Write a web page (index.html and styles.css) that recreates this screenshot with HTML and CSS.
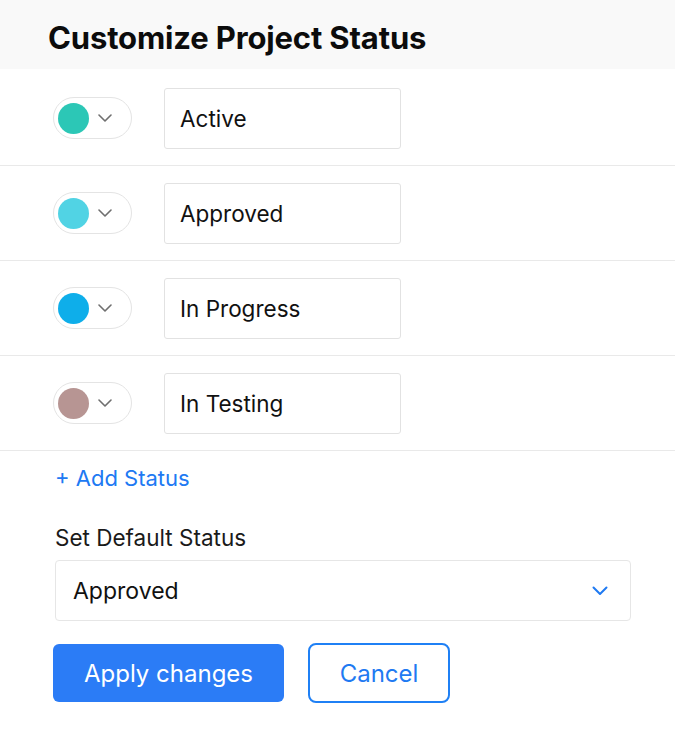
FILE: index.html
```html
<!DOCTYPE html>
<html lang="en">
<head>
<meta charset="utf-8">
<title>Customize Project Status</title>
<link rel="stylesheet" href="styles.css">
</head>
<body>
<div class="panel">
  <header class="header"><h1 class="title">Customize Project Status</h1></header>
  <div class="rows">
    <div class="row">
      <div class="picker"><span class="dot dot-active"></span><svg class="chev" viewBox="0 0 14 8" width="14" height="8"><path d="M1 1l6 6 6-6" fill="none" stroke="#6f6f6f" stroke-width="1.6" stroke-linecap="round" stroke-linejoin="round"/></svg></div>
      <div class="field">Active</div>
    </div>
    <div class="row">
      <div class="picker"><span class="dot dot-approved"></span><svg class="chev" viewBox="0 0 14 8" width="14" height="8"><path d="M1 1l6 6 6-6" fill="none" stroke="#6f6f6f" stroke-width="1.6" stroke-linecap="round" stroke-linejoin="round"/></svg></div>
      <div class="field">Approved</div>
    </div>
    <div class="row">
      <div class="picker"><span class="dot dot-progress"></span><svg class="chev" viewBox="0 0 14 8" width="14" height="8"><path d="M1 1l6 6 6-6" fill="none" stroke="#6f6f6f" stroke-width="1.6" stroke-linecap="round" stroke-linejoin="round"/></svg></div>
      <div class="field">In Progress</div>
    </div>
    <div class="row">
      <div class="picker"><span class="dot dot-testing"></span><svg class="chev" viewBox="0 0 14 8" width="14" height="8"><path d="M1 1l6 6 6-6" fill="none" stroke="#6f6f6f" stroke-width="1.6" stroke-linecap="round" stroke-linejoin="round"/></svg></div>
      <div class="field">In Testing</div>
    </div>
  </div>
  <div class="body">
    <a class="add" href="#">+ Add Status</a>
    <div class="label">Set Default Status</div>
    <div class="select"><span>Approved</span><svg class="select-chev" viewBox="0 0 16 10" width="16" height="10"><path d="M1.5 1.5l6.5 6.5 6.5-6.5" fill="none" stroke="#1f7af2" stroke-width="2" stroke-linecap="round" stroke-linejoin="round"/></svg></div>
    <div class="actions">
      <button class="btn btn-primary">Apply changes</button>
      <button class="btn btn-secondary">Cancel</button>
    </div>
  </div>
</div>
</body>
</html>
```
FILE: styles.css
```css
* { box-sizing: border-box; }
html, body { margin: 0; padding: 0; background: #fff; }
body { font-family: "Inter", "Lato", sans-serif; color: #111; }

.header {
  background: #f9f9f9;
  height: 69px;
  padding: 19px 0 0 48px;
}
.title {
  margin: 0;
  font-size: 31px;
  font-weight: 700;
  line-height: 38px;
  letter-spacing: -0.15px;
  color: #0c0c0c;
}

.rows { padding-top: 2px; }
.row {
  height: 95px;
  border-bottom: 1px solid #e9e9e9;
  display: flex;
  align-items: center;
  padding-left: 53px;
  gap: 32px;
}
.picker {
  width: 79px;
  height: 42px;
  border: 1px solid #e4e4e4;
  border-radius: 21px;
  display: flex;
  align-items: center;
  padding-left: 4px;
  gap: 9px;
}
.dot {
  width: 31px;
  height: 31px;
  border-radius: 50%;
  display: block;
}
.dot-active { background: #2cc7b6; }
.dot-approved { background: #51d3e4; }
.dot-progress { background: #0eaeea; }
.dot-testing { background: #b79593; }
.chev { display: block; }

.field {
  width: 237px;
  height: 61px;
  border: 1px solid #e2e2e2;
  border-radius: 3px;
  display: flex;
  align-items: center;
  padding-left: 15px;
  font-size: 22.5px;
  color: #111;
}

.body { padding: 13px 44px 0 55px; }
.add {
  display: block;
  color: #2079f3;
  text-decoration: none;
  font-size: 22px;
  line-height: 28px;
}
.label {
  margin-top: 32px;
  font-size: 22.5px;
  line-height: 28px;
  color: #1a1a1a;
}
.select {
  margin-top: 8px;
  height: 61px;
  border: 1px solid #e6e6e6;
  border-radius: 4px;
  display: flex;
  align-items: center;
  justify-content: space-between;
  padding: 0 22px 0 17px;
  font-size: 23px;
  color: #111;
}
.select-chev { display: block; }

.actions {
  margin: 22px 0 0 -2px;
  display: flex;
  align-items: center;
  gap: 24px;
}
.btn {
  font-family: inherit;
  font-size: 24px;
  cursor: pointer;
}
.btn-primary {
  width: 231px;
  height: 58px;
  border: none;
  border-radius: 6px;
  background: #2b7cf6;
  color: #fff;
}
.btn-secondary {
  width: 142px;
  height: 60px;
  border: 2px solid #1f80f5;
  border-radius: 8px;
  background: #fff;
  color: #1f7af2;
}
```
